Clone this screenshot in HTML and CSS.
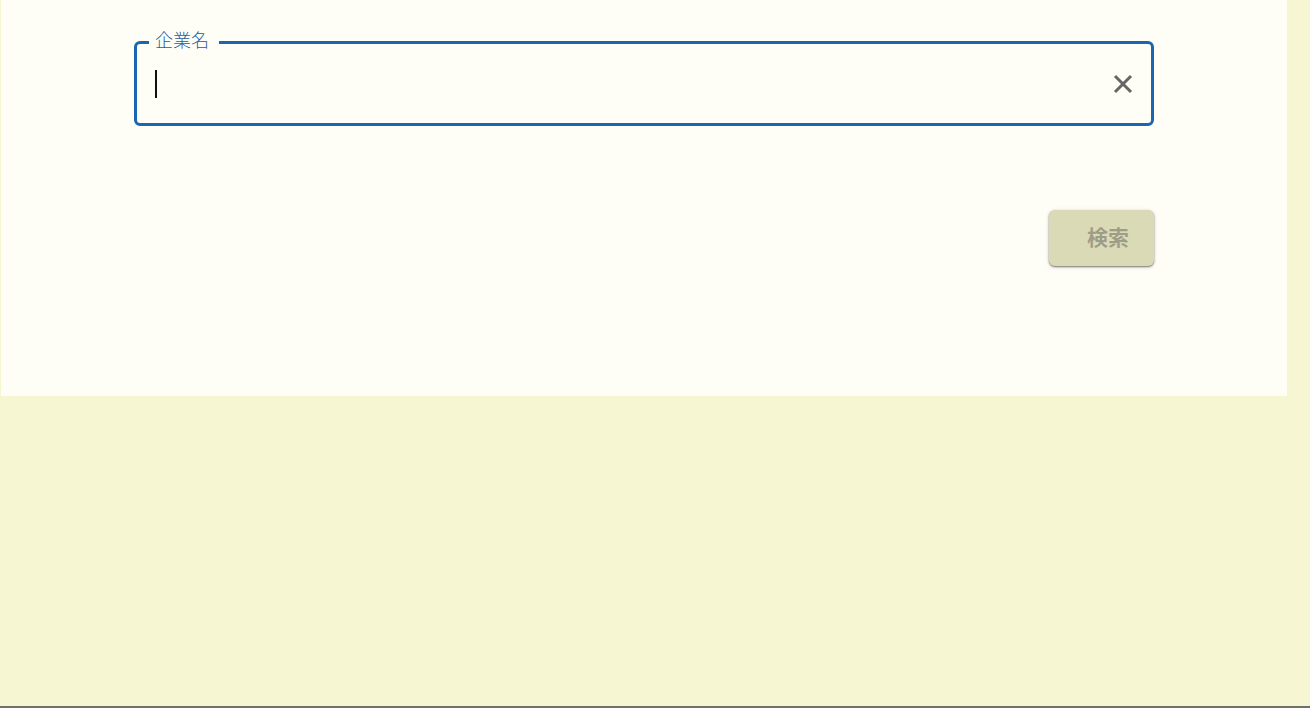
FILE: index.html
```html
<!DOCTYPE html>
<html lang="ja">
<head>
    <meta charset="UTF-8">
    <meta name="viewport" content="width=device-width, initial-scale=1.0">
    <title>企業検索</title>
    <link rel="stylesheet" href="styles.css">
</head>
<body>
    <main class="panel">
        <form class="search-form">
            <fieldset class="field">
                <legend class="field-legend"><label for="company">企業名</label></legend>
                <span class="caret"></span>
                <input class="field-input" type="text" id="company" name="company" autocomplete="off" autofocus>
                <button class="clear-button" type="reset" aria-label="クリア">
                    <svg class="clear-icon" viewBox="0 0 24 24" aria-hidden="true">
                        <path d="M6 6L18 18M18 6L6 18"/>
                    </svg>
                </button>
            </fieldset>
            <button class="search-button" type="submit" disabled>検索</button>
        </form>
    </main>
    <footer class="bottom-line"></footer>
</body>
</html>
```

FILE: styles.css
```css
* {
    box-sizing: border-box;
}
body {
    margin: 0;
    min-height: 100vh;
    display: flex;
    flex-direction: column;
    justify-content: space-between;
    background: #f6f6d2;
    font-family: "Noto Sans CJK JP", sans-serif;
}
.panel {
    margin: 0 23px 0 1px;
    padding: 29px 133px 130px 133px;
    background: #fefef6;
}
.search-form {
    display: flex;
    flex-direction: column;
    align-items: flex-end;
    gap: 84px;
}
.field {
    display: flex;
    align-items: center;
    width: 100%;
    min-width: 0;
    margin: 0;
    padding: 7px 12px 17px 18px;
    border: 3px solid #1a66b0;
    border-radius: 6px;
}
.field-legend {
    margin-left: -6px;
    padding: 0 10px 6px 6px;
    color: #1f5c98;
    font-size: 18px;
    font-weight: 300;
    line-height: 20px;
}
.caret {
    width: 2px;
    height: 28px;
    background: #111;
}
.field-input {
    flex: 1;
    min-width: 0;
    height: 44px;
    padding: 0;
    border: 0;
    outline: 0;
    background: transparent;
    color: #222;
    caret-color: transparent;
    font-family: inherit;
    font-size: 22px;
}
.clear-button {
    display: flex;
    padding: 0;
    border: 0;
    background: transparent;
    cursor: pointer;
}
.clear-icon {
    width: 32px;
    height: 32px;
    stroke: #666;
    stroke-width: 2.3;
}
.search-button {
    padding: 0 25px 5px 38px;
    height: 56px;
    border: 0;
    border-radius: 6px;
    background: #dadab6;
    box-shadow: 0 1px 2px rgba(0, 0, 0, 0.5), 0 1px 5px rgba(0, 0, 0, 0.1);
    color: #9e9e88;
    font-family: inherit;
    font-size: 21px;
    font-weight: 700;
}
.bottom-line {
    height: 2px;
    background: #70706a;
}
```
